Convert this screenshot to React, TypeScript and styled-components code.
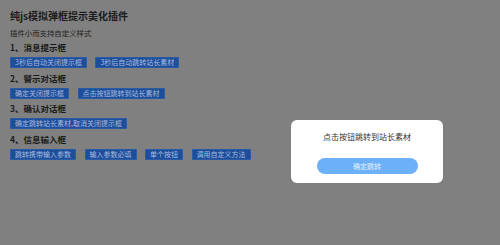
import React from 'react';
import styled, { createGlobalStyle } from 'styled-components';

const GlobalStyle = createGlobalStyle`
    html, body {
        margin: 0;
        padding: 0;
        background: #808080;
    }
    body {
        font-family: "Noto Sans CJK SC", "Noto Sans", sans-serif;
        color: #1a1a1a;
    }
`;

const Page = styled.div`
    position: relative;
    width: 500px;
    height: 245px;
    overflow: hidden;
    box-sizing: border-box;
    padding: 9px 10px 0;
`;

const Title = styled.h1`
    margin: 0;
    font-size: 10px;
    line-height: 14px;
    font-weight: 700;
    color: #1c1c1c;
`;

const Subtitle = styled.p`
    margin: 5px 0 0;
    font-size: 7.4px;
    line-height: 10px;
    color: #1e1e1e;
`;

const Sections = styled.div`
    display: flex;
    flex-direction: column;
    gap: 3.7px;
    margin-top: 3px;
`;

const Section = styled.section`
    display: flex;
    flex-direction: column;
    gap: 4px;
`;

const Heading = styled.h2`
    margin: 0;
    font-size: 8.5px;
    line-height: 12px;
    font-weight: 700;
    color: #1a1a1a;
`;

const Row = styled.div`
    display: flex;
    gap: 8.5px;
`;

const Button = styled.button`
    height: 11px;
    padding: 0 5px;
    border: none;
    box-shadow: inset 0 0 0 0.6px #3a67ad;
    background: #1d4e9b;
    color: #a7bbdf;
    font-family: inherit;
    font-size: 7px;
    line-height: 11px;
    white-space: nowrap;
    cursor: pointer;
`;

const Dialog = styled.div`
    position: absolute;
    left: 291px;
    top: 120px;
    width: 152px;
    height: 63px;
    box-sizing: border-box;
    padding-top: 10.5px;
    background: #fff;
    border-radius: 6px;
    display: flex;
    flex-direction: column;
    align-items: center;
    gap: 15.5px;
`;

const DialogText = styled.p`
    margin: 0;
    font-size: 8px;
    line-height: 12px;
    color: #333;
`;

const ConfirmButton = styled.button`
    width: 101px;
    height: 16px;
    border: none;
    border-radius: 8px;
    background: #6cb0f8;
    color: #e4f0fe;
    font-family: inherit;
    font-size: 7px;
    line-height: 16px;
    padding: 0;
    cursor: pointer;
`;

const sections = [
    { title: '1、消息提示框', buttons: ['3秒后自动关闭提示框', '3秒后自动跳转站长素材'] },
    { title: '2、警示对话框', buttons: ['确定关闭提示框', '点击按钮跳转到站长素材'] },
    { title: '3、确认对话框', buttons: ['确定跳转站长素材,取消关闭提示框'] },
    { title: '4、信息输入框', buttons: ['跳转携带输入参数', '输入参数必填', '单个按钮', '调用自定义方法'] },
];

const App: React.FC = () => {
    return (
        <>
            <GlobalStyle />
            <Page>
                <Title>纯js模拟弹框提示美化插件</Title>
                <Subtitle>插件小而支持自定义样式</Subtitle>
                <Sections>
                    {sections.map((s) => (
                        <Section key={s.title}>
                            <Heading>{s.title}</Heading>
                            <Row>
                                {s.buttons.map((b) => (
                                    <Button key={b}>{b}</Button>
                                ))}
                            </Row>
                        </Section>
                    ))}
                </Sections>
                <Dialog>
                    <DialogText>点击按钮跳转到站长素材</DialogText>
                    <ConfirmButton>确定跳转</ConfirmButton>
                </Dialog>
            </Page>
        </>
    );
};

export default App;
